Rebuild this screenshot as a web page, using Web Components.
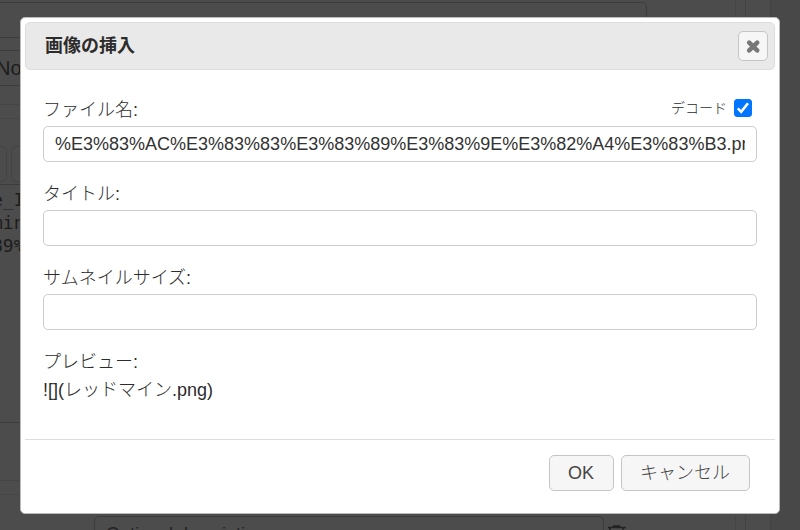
<!DOCTYPE html>
<html lang="ja">
<head>
<meta charset="utf-8">
<title>画像の挿入</title>
<style>
html,body{margin:0;height:100%;overflow:hidden;background:#484848;color:#2c2c2c;font:300 18px/28px "Liberation Sans","Noto Sans CJK JP",sans-serif}
</style>
</head>
<body>
<wiki-backdrop></wiki-backdrop>
<modal-dialog heading="画像の挿入">
  <text-field label="ファイル名:" value="%E3%83%AC%E3%83%83%E3%83%89%E3%83%9E%E3%82%A4%E3%83%B3.png"><check-option slot="extra" label="デコード" checked></check-option></text-field>
  <text-field label="タイトル:"></text-field>
  <text-field label="サムネイルサイズ:"></text-field>
  <preview-text label="プレビュー:">![](レッドマイン.png)</preview-text>
  <action-button slot="actions">OK</action-button>
  <action-button slot="actions">キャンセル</action-button>
</modal-dialog>
<script>
const define = (name, html, setup) => customElements.define(name, class extends HTMLElement {
  constructor() {
    super();
    this.attachShadow({mode: 'open'}).innerHTML = html;
  }
  connectedCallback() { if (setup) setup(this, this.shadowRoot); }
});

define('wiki-backdrop', `
<style>
*{box-sizing:border-box}
:host{display:grid;grid-template-columns:1fr 10px 25px 29px;height:100vh;overflow:hidden;background:#4c4c4c;color:#1c1c1c}
.main{border-right:1px solid #454545;overflow:hidden}
.gutter,.side{border-right:1px solid #434343}
.edge{background:#484848}
input,select,textarea{display:block;appearance:none;margin:0;border:1px solid #3c3c3c;border-radius:5px;background:#4c4c4c;color:inherit;font:inherit;outline:0}
.subject{width:calc(100% - 88px);height:36px;margin-top:2px;border-left:0;border-radius:0 5px 5px 0}
.status{width:100px;height:36px;margin:12px 0 0 -4px;padding:0;border-left:0;border-radius:0 5px 5px 0;font-size:20px}
.group{margin-top:18px;border-top:1px solid #454545}
.inner{margin-top:13px;border-top:1px solid #454545;padding-top:27px}
.tools{display:flex;gap:4px}
.tools button{width:40px;height:36px;padding:0;border:1px solid #444;border-radius:5px;background:none}
.tools button:first-child{width:7px;border-left:0;border-radius:0 5px 5px 0}
textarea{width:100%;height:239px;margin:2px 0 0 -8px;padding:3px 0;border-width:1px 0;border-radius:0;resize:none;overflow:hidden;font:18px/23px "DejaVu Sans Mono",monospace}
.files{margin-top:57px;border-top:1px solid #454545}
.attach{margin-top:13px;border-top:1px solid #454545;padding:21px 0 0 94px;display:flex;gap:4px}
.attach input{width:510px;height:36px;padding:0 11px}
.attach input::placeholder{color:#222;opacity:1}
svg{width:20px;height:22px;margin-top:8px}
</style>
<div class="main">
  <input class="subject" aria-label="Subject">
  <select class="status" aria-label="Status"><option>No</option></select>
  <div class="group"><div class="inner">
    <div class="tools"><button aria-label="Tab"></button><button aria-label="Bold"></button></div>
    <textarea aria-label="Description">e_I
min
89%</textarea>
  </div></div>
  <div class="files"><div class="attach">
    <input aria-label="Description" placeholder="Optional description">
    <svg viewBox="0 0 20 22" fill="none" stroke="#222" stroke-width="1.5"><path d="M0 4.5V3.5h17v1M5.500 3.500V2h6v1.500M2 4v16h13V4"/></svg>
  </div></div>
</div>
<div class="gutter"></div><div class="side"></div><div class="edge"></div>`);

define('modal-dialog', `
<style>
*{box-sizing:border-box}
:host{position:absolute;inset:0;padding:17px 20px;display:block}
section{background:#fff;border:1px solid #bbb;border-radius:5px;padding:4px}
header{display:flex;align-items:center;justify-content:space-between;height:48px;padding:0 6px 0 19px;background:#e9e9e9;border:1px solid #ddd;border-radius:5px}
h1{margin:0;font-size:18px;line-height:28px}
button{display:flex;align-items:center;justify-content:center;width:30px;height:30px;padding:0;border:1px solid #c5c5c5;border-radius:5px;background:#f6f6f6}
svg{width:18px;height:18px}
.body{display:grid;gap:18px;padding:26px 18px 35px}
footer{display:flex;justify-content:flex-end;gap:7px;border-top:1px solid #ddd;padding:15px 25px 18px}
</style>
<section role="dialog" aria-labelledby="heading">
  <header><h1 id="heading"></h1><button aria-label="閉じる"><svg viewBox="0 0 18 18"><path d="M5.200 5.700l8 7.600m0-7.600l-8 7.600" stroke="#777" stroke-width="4.600" stroke-linecap="round"/></svg></button></header>
  <div class="body"><slot></slot></div>
  <footer><slot name="actions"></slot></footer>
</section>`, (el, root) => { root.querySelector('h1').textContent = el.getAttribute('heading'); });

define('text-field', `
<style>
:host{display:block}
.top{display:flex;justify-content:space-between;margin-bottom:2px}
input{display:block;box-sizing:border-box;width:100%;height:36px;padding:0 11px;border:1px solid #ccc;border-radius:5px;background:#fff;color:#333;font:inherit;outline:0}
</style>
<div class="top"><label for="field"></label><slot name="extra"></slot></div>
<input id="field" type="text">`, (el, root) => {
  root.querySelector('label').textContent = el.getAttribute('label');
  root.querySelector('input').value = el.getAttribute('value') || '';
});

define('check-option', `
<style>
:host{display:flex;align-items:center;gap:7px;padding:0 5px 4px 0;font-size:14px;line-height:24px}
input{appearance:none;display:grid;margin:0;width:18px;height:18px;border:1px solid #777;border-radius:3px;background:#fff}
input:checked{border-color:#0075ff;background:#0075ff}
.box{display:grid}
.box>*{grid-area:1/1}
svg{width:18px;height:18px;pointer-events:none}
input:not(:checked)+svg{display:none}
</style>
<label for="check"></label>
<span class="box"><input id="check" type="checkbox"><svg viewBox="0 0 18 18"><path d="M3.800 9.400l3.400 3.400 6.800-8.600" fill="none" stroke="#fff" stroke-width="2.600"/></svg></span>`, (el, root) => {
  root.querySelector('label').textContent = el.getAttribute('label');
  root.querySelector('input').checked = el.hasAttribute('checked');
});

define('preview-text', `
<style>:host{display:block}</style>
<div class="label"></div><div><slot></slot></div>`, (el, root) => {
  root.querySelector('.label').textContent = el.getAttribute('label');
});

define('action-button', `
<style>
:host{display:block}
button{box-sizing:border-box;height:36px;padding:0 19px 0 18px;border:1px solid #c5c5c5;border-radius:5px;background:#f6f6f6;color:#454545;font:inherit}
</style>
<button type="button"><slot></slot></button>`);
</script>
</body>
</html>
